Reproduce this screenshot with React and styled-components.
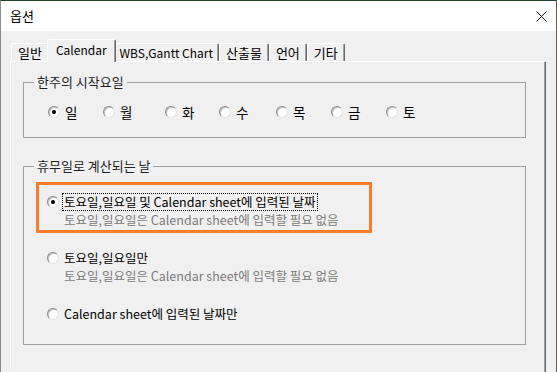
import React from 'react';
import styled, { createGlobalStyle } from 'styled-components';

const Global = createGlobalStyle`
  html, body { margin: 0; padding: 0; background: #f0f0f0; }
  body {
    font-family: "Noto Sans CJK KR", "Noto Sans", sans-serif;
    font-size: 12.5px;
    color: #000;
  }
`;

const Window = styled.div`
  width: 557px;
  height: 372px;
  box-sizing: border-box;
  border-top: 1px solid #25402d;
  border-left: 1px solid #8a8a8a;
  border-right: 1px solid #6b5a48;
  background: #f0f0f0;
  overflow: hidden;
  display: flex;
  flex-direction: column;
`;

const TitleBar = styled.div`
  height: 30px;
  flex: none;
  background: #fff;
  display: flex;
  align-items: center;
  justify-content: space-between;
  padding: 0 9px;
`;

const Title = styled.span`
  font-size: 13px;
  line-height: 16px;
`;

const Body = styled.div`
  flex: 1;
  display: flex;
  flex-direction: column;
  padding: 8px 0 0 9px;
`;

const TabStrip = styled.div`
  display: flex;
  align-items: flex-end;
  height: 22px;
  padding-left: 1px;
`;

const Tab = styled.div`
  position: relative;
  box-sizing: border-box;
  height: ${p => (p.$active ? 23 : 18)}px;
  margin: ${p => (p.$active ? '0 -2px -1px' : '0')};
  padding: 0 ${p => (p.$active ? 8 : p.$hangul ? 6 : 5)}px;
  font-size: ${p => (p.$hangul ? 13 : 12)}px;
  line-height: ${p => (p.$active ? 19 : 17)}px;
  border: 1px solid;
  border-bottom: none;
  border-color: #fff #696969 transparent #fff;
  border-radius: 2px 2px 0 0;
  box-shadow: inset -1px 0 0 #a0a0a0;
  background: #f0f0f0;
  z-index: ${p => (p.$active ? 2 : 1)};
  white-space: nowrap;
`;

const Panel = styled.div`
  flex: 1;
  width: 536px;
  box-sizing: border-box;
  border-top: 1px solid #fff;
  border-left: 1px solid #fff;
  border-right: 1px solid #696969;
  box-shadow: inset -1px 0 0 #a0a0a0;
  padding-left: 12px;
`;

const Group = styled.fieldset`
  margin: ${p => p.$mt}px 0 0 0;
  width: 503px;
  box-sizing: border-box;
  border: 1px solid #a0a0a0;
  padding: 0;
  min-inline-size: 0;
`;

const Legend = styled.legend`
  margin-left: 10px;
  padding: 0 3px;
  font-size: 13px;
  line-height: 18px;
  color: #1e1e1e;
`;

const DayRow = styled.div`
  display: flex;
  padding: 12px 0 16px 24px;
  font-size: 13.5px;
`;

const DayItem = styled.div`
  display: flex;
  align-items: center;
  width: ${p => p.$w}px;
  height: 18px;
`;

const Radio = styled.span`
  flex: none;
  width: 12px;
  height: 12px;
  box-sizing: border-box;
  border-radius: 50%;
  background: #fff;
  border: 1px solid;
  border-color: #8a8a8a #e2e2e2 #e2e2e2 #8a8a8a;
  box-shadow: inset 1px 1px 0 #c4c4c4;
  display: flex;
  align-items: center;
  justify-content: center;

  &::after {
    content: '';
    width: 4px;
    height: 4px;
    border-radius: 50%;
    background: ${p => (p.$checked ? '#000' : 'transparent')};
  }
`;

const Label = styled.span`
  margin-left: 3px;
  padding: 0 1px;
  line-height: 16px;
  border: 1px dotted ${p => (p.$focus ? '#000' : 'transparent')};
  white-space: nowrap;
`;

const OptionList = styled.div`
  display: flex;
  flex-direction: column;
  gap: 5px;
  padding: 7px 0 16px 12px;
`;

const OptionBox = styled.div`
  width: 336px;
  box-sizing: border-box;
  border: 3px solid ${p => (p.$highlight ? '#fb7d2b' : 'transparent')};
  padding: 8px 8px 2px;
`;

const OptionRow = styled.div`
  display: flex;
  align-items: center;
  height: 18px;
`;

const Sub = styled.div`
  padding-left: 17px;
  line-height: 17px;
  color: #7b7b7b;
  white-space: nowrap;
`;

const CloseIcon = () => (
  <svg width="11" height="11" viewBox="0 0 11 11">
    <path d="M0.5 0.5 L10.5 10.5 M10.5 0.5 L0.5 10.5" stroke="#111" strokeWidth="1" />
  </svg>
);

const tabs = [
  { t: '일반', hangul: true },
  { t: 'Calendar', active: true },
  { t: 'WBS,Gantt Chart' },
  { t: '산출물', hangul: true },
  { t: '언어', hangul: true },
  { t: '기타', hangul: true },
];

const days = [
  { d: '일', w: 55, checked: true },
  { d: '월', w: 62 },
  { d: '화', w: 54 },
  { d: '수', w: 57 },
  { d: '목', w: 55 },
  { d: '금', w: 55 },
  { d: '토', w: 60 },
];

const options = [
  {
    label: '토요일,일요일 및 Calendar sheet에 입력된 날짜',
    sub: '토요일,일요일은 Calendar sheet에 입력할 필요 없음',
    checked: true,
  },
  {
    label: '토요일,일요일만',
    sub: '토요일,일요일은 Calendar sheet에 입력할 필요 없음',
  },
  { label: 'Calendar sheet에 입력된 날짜만' },
];

export default function App() {
  return (
    <Window>
      <Global />
      <TitleBar>
        <Title>옵션</Title>
        <CloseIcon />
      </TitleBar>
      <Body>
        <TabStrip>
          {tabs.map(tab => (
            <Tab key={tab.t} $active={tab.active} $hangul={tab.hangul}>{tab.t}</Tab>
          ))}
        </TabStrip>
        <Panel>
          <Group $mt={11}>
            <Legend>한주의 시작요일</Legend>
            <DayRow>
              {days.map(item => (
                <DayItem key={item.d} $w={item.w}>
                  <Radio $checked={item.checked} />
                  <Label>{item.d}</Label>
                </DayItem>
              ))}
            </DayRow>
          </Group>
          <Group $mt={19}>
            <Legend>휴무일로 계산되는 날</Legend>
            <OptionList>
              {options.map(o => (
                <OptionBox key={o.label} $highlight={o.checked}>
                  <OptionRow>
                    <Radio $checked={o.checked} />
                    <Label $focus={o.checked}>{o.label}</Label>
                  </OptionRow>
                  {o.sub && <Sub>{o.sub}</Sub>}
                </OptionBox>
              ))}
            </OptionList>
          </Group>
        </Panel>
      </Body>
    </Window>
  );
}
